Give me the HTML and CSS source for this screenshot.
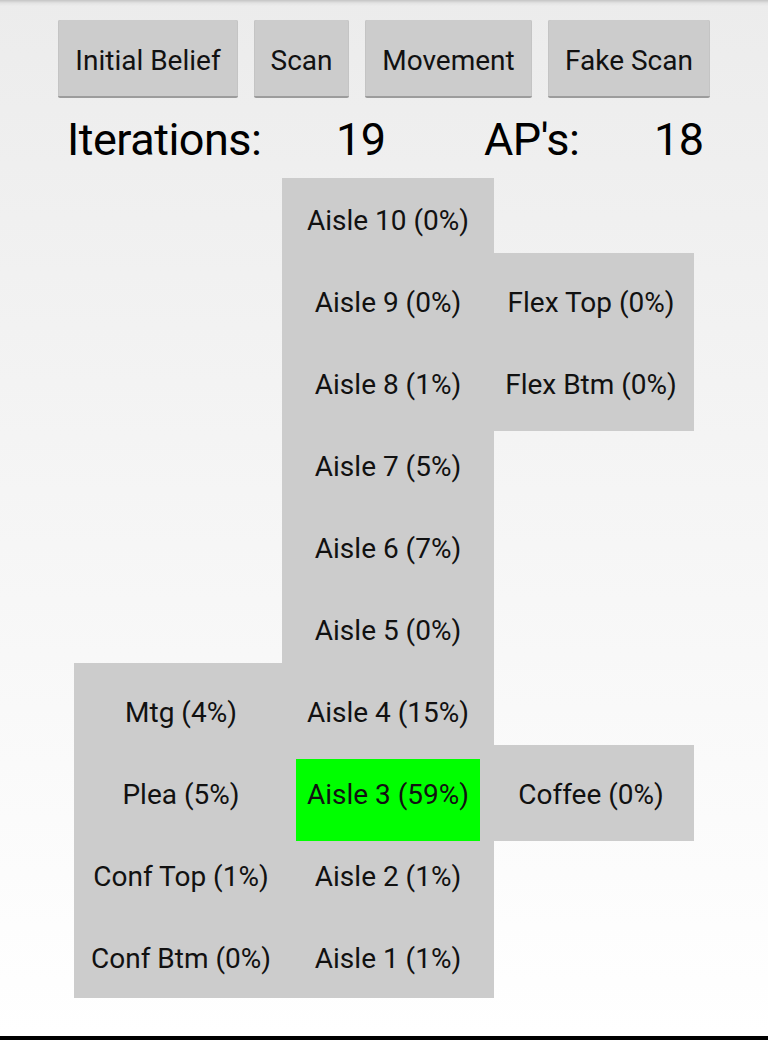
FILE: index.html
```html
<!DOCTYPE html>
<html>
<head>
<meta charset="utf-8">
<link rel="stylesheet" href="styles.css">
</head>
<body>
<div class="screen">
  <main class="content">
    <div class="toolbar">
      <button class="btn">Initial Belief</button>
      <button class="btn">Scan</button>
      <button class="btn">Movement</button>
      <button class="btn">Fake Scan</button>
    </div>
    <div class="stats">
      <span class="stat">Iterations:</span>
      <span class="stat">19</span>
      <span class="stat">AP's:</span>
      <span class="stat">18</span>
    </div>
    <div class="map">
      <div class="block block-aisles">
        <div class="cell">Aisle 10 (0%)</div>
        <div class="cell">Aisle 9 (0%)</div>
        <div class="cell">Aisle 8 (1%)</div>
        <div class="cell">Aisle 7 (5%)</div>
        <div class="cell">Aisle 6 (7%)</div>
        <div class="cell">Aisle 5 (0%)</div>
        <div class="cell">Aisle 4 (15%)</div>
        <div class="cell cell-active"><span class="cell-label">Aisle 3 (59%)</span></div>
        <div class="cell">Aisle 2 (1%)</div>
        <div class="cell">Aisle 1 (1%)</div>
      </div>
      <div class="block block-flex side-right">
        <div class="cell">Flex Top (0%)</div>
        <div class="cell">Flex Btm (0%)</div>
      </div>
      <div class="block block-coffee side-right">
        <div class="cell">Coffee (0%)</div>
      </div>
      <div class="block block-left side-left">
        <div class="cell">Mtg (4%)</div>
        <div class="cell">Plea (5%)</div>
        <div class="cell">Conf Top (1%)</div>
        <div class="cell">Conf Btm (0%)</div>
      </div>
    </div>
  </main>
  <div class="navbar"></div>
</div>
</body>
</html>
```

FILE: styles.css
```css
html, body {
  margin: 0;
  padding: 0;
}

body {
  width: 768px;
  height: 1040px;
  overflow: hidden;
  font-family: Roboto, "Liberation Sans", sans-serif;
  color: #111111;
}

.screen {
  height: 1040px;
  display: flex;
  flex-direction: column;
  background:
    linear-gradient(to bottom, #c4c4c4 0px, #e2e2e2 3px, rgba(236,236,236,0) 6px),
    linear-gradient(to bottom, #ececec 0px, #ffffff 1036px);
}

.content {
  flex: 1;
  display: flex;
  flex-direction: column;
}

.toolbar {
  display: flex;
  justify-content: center;
  gap: 16px;
  padding-top: 20px;
}

.btn {
  height: 78px;
  box-sizing: border-box;
  padding: 5px 16px 0;
  border: none;
  border-bottom: 2px solid #9c9c9c;
  border-radius: 2px;
  background: #cccccc;
  box-shadow: inset 1px 0 0 #c4c4c4, inset -1px 0 0 #c4c4c4;
  font-family: Roboto, "Liberation Sans", sans-serif;
  font-size: 28px;
  color: #111111;
  line-height: 28px;
}

.btn:nth-child(1) { width: 180px; }
.btn:nth-child(2) { width: 95px; }
.btn:nth-child(3) { width: 167px; }
.btn:nth-child(4) { width: 162px; }

.stats {
  display: grid;
  grid-template-columns: 269px 148px 170px auto;
  padding-left: 67px;
  margin-top: 19px;
  font-size: 45px;
  line-height: 45px;
  letter-spacing: -0.5px;
  color: #000000;
}

.map {
  display: grid;
  grid-template-columns: 208px 212px 200px;
  grid-template-rows: repeat(10, 82px);
  margin-top: 16px;
  padding-left: 74px;
}

.block {
  background: #cccccc;
  display: flex;
  flex-direction: column;
}

.block-aisles {
  grid-column: 2;
  grid-row: 1 / 11;
}

.block-flex {
  grid-column: 3;
  grid-row: 2 / 4;
  margin: -7px 0;
  padding: 7px 0;
}

.block-coffee {
  grid-column: 3;
  grid-row: 8;
  margin: -7px 0;
  padding: 7px 0;
}

.block-left {
  grid-column: 1;
  grid-row: 7 / 11;
  margin-top: -7px;
  padding-top: 7px;
}

.cell {
  height: 82px;
  flex: none;
  box-sizing: border-box;
  padding-top: 2px;
  display: flex;
  align-items: center;
  justify-content: center;
  font-size: 28px;
  color: #111111;
  white-space: nowrap;
}

.side-left .cell {
  padding-left: 6px;
}

.side-right .cell {
  padding-right: 6px;
}

.cell-active {
  position: relative;
}

.cell-active::before {
  content: "";
  position: absolute;
  left: 14px;
  right: 14px;
  top: 7px;
  height: 82px;
  background: #00ff00;
}

.cell-label {
  position: relative;
}

.navbar {
  height: 4px;
  background: #000000;
  flex: none;
}
```
